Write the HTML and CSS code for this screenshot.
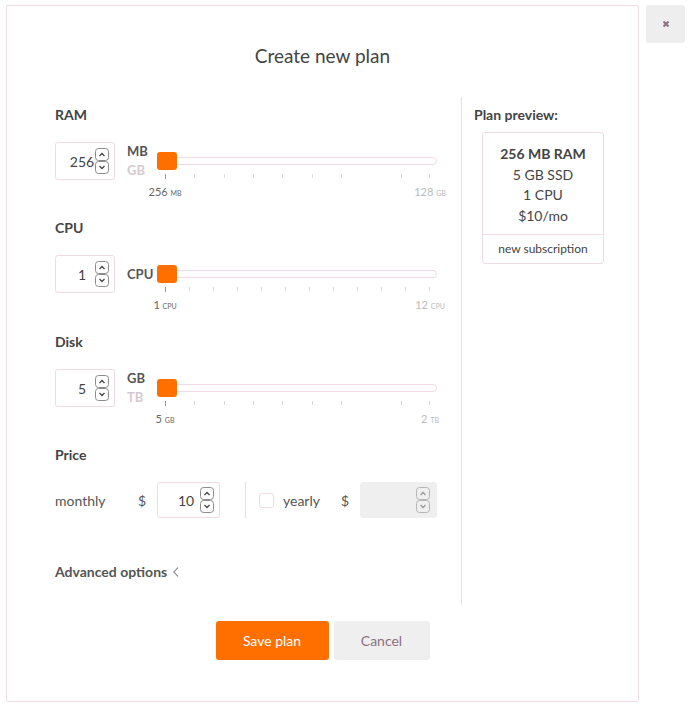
FILE: index.html
```html
<!DOCTYPE html>
<html>
<head>
<meta charset="utf-8">
<link rel="stylesheet" href="styles.css">
</head>
<body>
<div class="page">
  <div class="modal">
    <h1 class="title">Create new plan</h1>
    <div class="body">
      <div class="main">
        <section class="field">
          <div class="label">RAM</div>
          <div class="row">
            <div class="num"><span class="val">256</span>
              <svg class="spin" width="15" height="26" viewBox="0 0 15 26"><rect x="0.5" y="0.5" width="13" height="12" rx="3"/><rect x="0.5" y="13.5" width="13" height="12" rx="3"/><path d="M4.5 8 L7 5.5 L9.5 8"/><path d="M4.5 18 L7 20.5 L9.5 18"/></svg>
            </div>
            <div class="units"><span class="on">MB</span><span class="off">GB</span></div>
            <div class="slider">
              <div class="track"><div class="thumb"></div></div>
              <div class="ticks">
                <i class="first" style="left:8px"></i><i style="left:37px"></i><i style="left:67px"></i><i style="left:96px"></i><i style="left:125px"></i><i style="left:155px"></i><i style="left:184px"></i><i style="left:244px"></i><i style="left:272px"></i>
              </div>
              <div class="ends"><span class="min" style="left:8px">256 <small>MB</small></span><span class="max" style="left:273px">128 <small>GB</small></span></div>
            </div>
          </div>
        </section>

        <section class="field cpu">
          <div class="label">CPU</div>
          <div class="row">
            <div class="num"><span class="val">1</span>
              <svg class="spin" width="15" height="26" viewBox="0 0 15 26"><rect x="0.5" y="0.5" width="13" height="12" rx="3"/><rect x="0.5" y="13.5" width="13" height="12" rx="3"/><path d="M4.5 8 L7 5.5 L9.5 8"/><path d="M4.5 18 L7 20.5 L9.5 18"/></svg>
            </div>
            <div class="units single"><span class="on">CPU</span></div>
            <div class="slider">
              <div class="track"><div class="thumb"></div></div>
              <div class="ticks">
                <i class="first" style="left:8px"></i><i style="left:32px"></i><i style="left:56px"></i><i style="left:80px"></i><i style="left:104px"></i><i style="left:128px"></i><i style="left:152px"></i><i style="left:176px"></i><i style="left:200px"></i><i style="left:224px"></i><i style="left:248px"></i><i style="left:272px"></i>
              </div>
              <div class="ends"><span class="min" style="left:8px">1 <small>CPU</small></span><span class="max" style="left:273px">12 <small>CPU</small></span></div>
            </div>
          </div>
        </section>

        <section class="field">
          <div class="label">Disk</div>
          <div class="row">
            <div class="num"><span class="val">5</span>
              <svg class="spin" width="15" height="26" viewBox="0 0 15 26"><rect x="0.5" y="0.5" width="13" height="12" rx="3"/><rect x="0.5" y="13.5" width="13" height="12" rx="3"/><path d="M4.5 8 L7 5.5 L9.5 8"/><path d="M4.5 18 L7 20.5 L9.5 18"/></svg>
            </div>
            <div class="units"><span class="on">GB</span><span class="off">TB</span></div>
            <div class="slider">
              <div class="track"><div class="thumb"></div></div>
              <div class="ticks">
                <i class="first" style="left:8px"></i><i style="left:37px"></i><i style="left:67px"></i><i style="left:96px"></i><i style="left:125px"></i><i style="left:155px"></i><i style="left:184px"></i><i style="left:244px"></i><i style="left:272px"></i>
              </div>
              <div class="ends"><span class="min" style="left:8px">5 <small>GB</small></span><span class="max" style="left:273px">2 <small>TB</small></span></div>
            </div>
          </div>
        </section>

        <section class="price">
          <div class="label">Price</div>
          <div class="price-row">
            <span class="period">monthly</span>
            <span class="cur">$</span>
            <div class="num small"><span class="val">10</span>
              <svg class="spin" width="15" height="26" viewBox="0 0 15 26"><rect x="0.5" y="0.5" width="13" height="12" rx="3"/><rect x="0.5" y="13.5" width="13" height="12" rx="3"/><path d="M4.5 8 L7 5.5 L9.5 8"/><path d="M4.5 18 L7 20.5 L9.5 18"/></svg>
            </div>
            <span class="vsep"></span>
            <span class="check"></span>
            <span class="period yearly">yearly</span>
            <span class="cur">$</span>
            <div class="num disabled"><span class="val"></span>
              <svg class="spin light" width="15" height="26" viewBox="0 0 15 26"><rect x="0.5" y="0.5" width="13" height="12" rx="3"/><rect x="0.5" y="13.5" width="13" height="12" rx="3"/><path d="M4.5 8 L7 5.5 L9.5 8"/><path d="M4.5 18 L7 20.5 L9.5 18"/></svg>
            </div>
          </div>
        </section>

        <div class="advanced">Advanced options <svg width="8" height="12" viewBox="0 0 8 12"><path d="M6 1.5 L1.8 6 L6 10.5"/></svg></div>
      </div>
      <aside class="preview">
        <div class="label">Plan preview:</div>
        <div class="card">
          <div class="card-body">
            <strong>256 MB RAM</strong>
            <span>5 GB SSD</span>
            <span>1 CPU</span>
            <span>$10/mo</span>
          </div>
          <div class="card-foot">new subscription</div>
        </div>
      </aside>
    </div>
    <div class="actions">
      <button class="btn save">Save plan</button>
      <button class="btn cancel">Cancel</button>
    </div>
  </div>
  <button class="close"><svg width="8" height="8" viewBox="0 0 8 8"><path d="M1.5 1.5 L6.5 6.5 M6.5 1.5 L1.5 6.5"/></svg></button>
</div>
</body>
</html>
```

FILE: styles.css
```css
* { box-sizing: border-box; }
html, body { margin: 0; padding: 0; background: #fff; }
body {
  font-family: "Source Sans Pro", Lato, "Liberation Sans", sans-serif;
  color: #444;
  font-size: 14px;
}
.page {
  display: flex;
  align-items: flex-start;
  padding: 5px 0 0 6px;
  gap: 7px;
}
.modal {
  width: 633px;
  height: 697px;
  border: 1px solid #eedbe6;
  border-radius: 2px;
  display: flex;
  flex-direction: column;
}
.title {
  margin: 38px 0 0;
  font-size: 19px;
  font-weight: 400;
  line-height: 24px;
  text-align: center;
  color: #444;
}
.body {
  display: flex;
  margin-top: 29px;
  height: 508px;
}
.main {
  width: 454px;
  padding: 8px 0 0 48px;
}
.label {
  font-weight: 700;
  line-height: 20px;
  font-size: 14px;
  color: #444;
}
.field { height: 113px; }
.field.cpu { height: 114px; }
.row {
  display: flex;
  align-items: flex-start;
  margin-top: 17px;
}
.num {
  position: relative;
  width: 60px;
  height: 38px;
  border: 1px solid #eedbe6;
  border-radius: 3px;
  display: flex;
  align-items: center;
  font-size: 14px;
  color: #444;
}
.num .val {
  flex: 1;
  text-align: center;
  padding-right: 6px;
}
.spin {
  display: block;
  position: absolute;
  right: 4px;
  top: 50%;
  margin-top: -13px;
}
.spin rect { fill: #fff; stroke: #8a8a8a; stroke-width: 1; }
.spin path { fill: none; stroke: #444; stroke-width: 1.3; }
.spin.light rect { fill: #efefef; stroke: #b5b5b5; }
.spin.light path { stroke: #999; }
.units {
  width: 42px;
  padding-left: 12px;
  height: 38px;
  display: flex;
  flex-direction: column;
  justify-content: center;
  font-size: 13px;
  font-weight: 700;
  line-height: 19px;
}
.units .on { color: #555; }
.units .off { color: #d5cad0; }
.slider {
  position: relative;
  width: 280px;
}
.track {
  position: relative;
  margin-top: 15px;
  height: 8px;
  border: 1px solid #efdbe7;
  border-radius: 4px;
}
.thumb {
  position: absolute;
  left: -1px;
  top: -6px;
  width: 20px;
  height: 18px;
  border-radius: 3px;
  background: #ff6f00;
}
.ticks {
  position: relative;
  height: 4px;
  margin-top: 9px;
}
.ticks i {
  position: absolute;
  top: 0;
  width: 1px;
  height: 4px;
  background: #d8d8d8;
}
.ticks i.first { background: #999; height: 5px; }
.ends {
  position: relative;
  height: 12px;
  margin-top: 8px;
  font-size: 11px;
  line-height: 12px;
}
.ends span {
  position: absolute;
  top: 0;
  transform: translateX(-50%);
  white-space: nowrap;
  color: #666;
}
.ends span.max { color: #bbb; }
.ends small { font-size: 7px; text-transform: uppercase; }
.price { height: 117px; }
.price-row {
  display: flex;
  align-items: center;
  margin-top: 17px;
  height: 36px;
  font-size: 14px;
  color: #555;
}
.period { width: 83px; }
.period.yearly { width: 58px; margin-left: 9px; }
.cur { width: 19px; }
.num.small { width: 63px; height: 36px; }
.num.small .val { padding-right: 5px; }
.vsep {
  width: 1px;
  height: 36px;
  background: #eedbe6;
  margin-left: 25px;
}
.check {
  width: 15px;
  height: 15px;
  margin-left: 13px;
  border: 1px solid #eedbe6;
  border-radius: 3px;
}
.num.disabled {
  width: 77px;
  height: 36px;
  background: #efefef;
  border-color: #efefef;
}
.num.disabled .spin { right: 5px; }
.advanced {
  display: flex;
  align-items: center;
  gap: 5px;
  font-weight: 700;
  line-height: 20px;
  color: #555;
}
.advanced path { fill: none; stroke: #999; stroke-width: 1.2; }
.preview {
  border-left: 1px solid #eedbe6;
  padding: 8px 0 0 12px;
  flex: 1;
}
.card {
  margin: 7px 0 0 8px;
  width: 122px;
  border: 1px solid #eedbe6;
  border-radius: 3px;
  text-align: center;
}
.card-body {
  display: flex;
  flex-direction: column;
  padding: 11px 0 8px;
  line-height: 20.5px;
  font-size: 14px;
  color: #444;
}
.card-foot {
  border-top: 1px solid #eedbe6;
  font-size: 12px;
  line-height: 28px;
  color: #444;
}
.actions {
  display: flex;
  justify-content: center;
  gap: 5px;
  margin-top: 16px;
}
.btn {
  border: none;
  border-radius: 3px;
  height: 39px;
  font-family: inherit;
  font-size: 14px;
}
.btn.save { width: 113px; background: #ff6f00; color: #fff; }
.btn.cancel { width: 96px; background: #efefef; color: #8a6f80; }
.close {
  width: 39px;
  height: 38px;
  border: none;
  border-radius: 3px;
  background: #eee;
  display: flex;
  align-items: center;
  justify-content: center;
  padding: 0;
}
.close path { stroke: #8a6f80; stroke-width: 2; }
```
